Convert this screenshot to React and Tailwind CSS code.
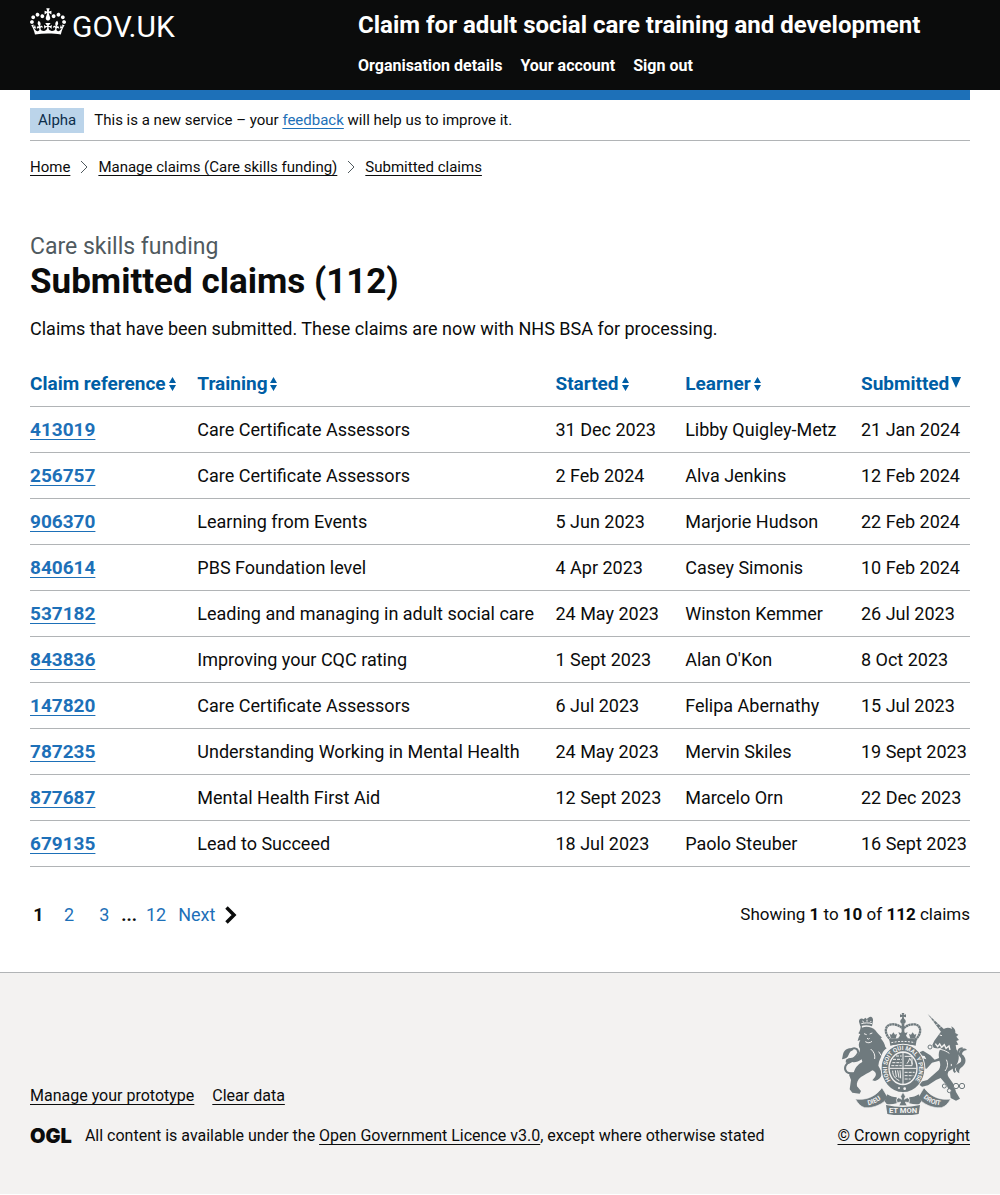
import React from "react";

const claims = [
  ["413019", "Care Certificate Assessors", "31 Dec 2023", "Libby Quigley-Metz", "21 Jan 2024"],
  ["256757", "Care Certificate Assessors", "2 Feb 2024", "Alva Jenkins", "12 Feb 2024"],
  ["906370", "Learning from Events", "5 Jun 2023", "Marjorie Hudson", "22 Feb 2024"],
  ["840614", "PBS Foundation level", "4 Apr 2023", "Casey Simonis", "10 Feb 2024"],
  ["537182", "Leading and managing in adult social care", "24 May 2023", "Winston Kemmer", "26 Jul 2023"],
  ["843836", "Improving your CQC rating", "1 Sept 2023", "Alan O'Kon", "8 Oct 2023"],
  ["147820", "Care Certificate Assessors", "6 Jul 2023", "Felipa Abernathy", "15 Jul 2023"],
  ["787235", "Understanding Working in Mental Health", "24 May 2023", "Mervin Skiles", "19 Sept 2023"],
  ["877687", "Mental Health First Aid", "12 Sept 2023", "Marcelo Orn", "22 Dec 2023"],
  ["679135", "Lead to Succeed", "18 Jul 2023", "Paolo Steuber", "16 Sept 2023"],
];

const columns = [
  { label: "Claim reference", width: "w-[17.8%]" },
  { label: "Training", width: "w-[38.1%]" },
  { label: "Started", width: "w-[13.8%]" },
  { label: "Learner", width: "w-[18.7%]" },
  { label: "Submitted", width: "w-[11.6%]", sorted: true },
];

function Crown() {
  return (
    <svg aria-hidden="true" viewBox="0 0 132 97" className="h-[27px] w-9 shrink-0" fill="currentColor">
      <path
        fillRule="evenodd"
        d="M25 30.2c3.5 1.5 7.7-.2 9.1-3.7 1.5-3.6-.2-7.8-3.9-9.2-3.6-1.4-7.6.3-9.1 3.9-1.4 3.5.3 7.5 3.9 9zM9 39.5c3.6 1.5 7.8-.2 9.2-3.7 1.5-3.6-.2-7.8-3.9-9.1-3.6-1.5-7.6.2-9.1 3.8-1.4 3.5.3 7.5 3.8 9zM4.4 57.2c3.5 1.5 7.7-.2 9.1-3.8 1.5-3.6-.2-7.7-3.9-9.1-3.5-1.5-7.6.3-9.1 3.8-1.4 3.5.3 7.6 3.9 9.1zm38.3-21.4c3.5 1.5 7.7-.2 9.1-3.8 1.5-3.6-.2-7.7-3.9-9.1-3.6-1.5-7.6.3-9.1 3.8-1.3 3.6.4 7.7 3.9 9.1zm64.4-5.6c-3.6 1.5-7.8-.2-9.1-3.7-1.5-3.6.2-7.8 3.8-9.2 3.6-1.4 7.7.3 9.2 3.9 1.3 3.5-.4 7.5-3.9 9zm15.9 9.3c-3.6 1.5-7.7-.2-9.1-3.7-1.5-3.6.2-7.8 3.7-9.1 3.6-1.5 7.7.2 9.2 3.8 1.5 3.5-.3 7.5-3.8 9zm4.7 17.7c-3.6 1.5-7.8-.2-9.2-3.8-1.5-3.6.2-7.7 3.9-9.1 3.6-1.5 7.7.3 9.2 3.8 1.3 3.5-.4 7.6-3.9 9.1zM89.3 35.8c-3.6 1.5-7.8-.2-9.2-3.8-1.4-3.6.2-7.7 3.9-9.1 3.6-1.5 7.7.3 9.2 3.8 1.4 3.6-.3 7.7-3.9 9.1zM69.7 17.7l8.9 4.7V9.3l-8.9 2.8c-.2-.3-.5-.6-.9-.9L72.4 0H59.6l3.5 11.2c-.3.3-.6.5-.9.9l-8.8-2.8v13.1l8.8-4.7c.3.3.6.7.9.9l-5 15.4v.1c-.2.8-.4 1.6-.4 2.4 0 4.1 3.1 7.5 7 8.1h.2c.3 0 .7.1 1 .1.4 0 .7 0 1-.1h.2c4-.6 7.1-4.1 7.1-8.1 0-.8-.1-1.7-.4-2.4V34l-5.1-15.4c.4-.2.7-.6 1-.9zM66 92.8c16.9 0 32.8 1.1 47.1 3.2 4-16.9 8.9-26.7 14-33.5l-9.6-3.4c1 4.9 1.1 7.2 0 10.2-1.5-1.4-3-4.3-4.2-8.7L108.6 76c2.8-2 5-3.2 7.5-3.3-4.4 9.4-10 11.9-13.6 11.2-4.3-.8-6.3-4.6-5.6-7.9 1-4.7 5.7-5.9 8-.5 4.3-8.7-3-11.4-7.6-8.8 7.1-7.2 7.9-13.5 2.1-21.1-8 6.1-8.1 12.3-4.5 20.8-4.7-5.4-12.1-2.5-9.5 6.2 3.4-5.2 7.9-2 7.2 3.1-.6 4.3-6.4 7.8-13.5 7.2-10.3-.9-10.9-8-11.2-13.8 2.5-.5 7.1 1.8 11 7.3L80.2 60c-4.1 4.4-8 5.3-12.3 5.4 1.4-4.4 8-11.6 8-11.6H55.5s6.4 7.2 7.9 11.6c-4.2-.1-8-1-12.3-5.4l1.4 16.4c3.9-5.5 8.5-7.7 10.9-7.3-.3 5.8-.9 12.8-11.1 13.8-7.2.6-12.9-2.9-13.5-7.2-.7-5 3.8-8.3 7.1-3.1 2.7-8.7-4.6-11.6-9.4-6.2 3.7-8.5 3.6-14.7-4.6-20.8-5.8 7.6-5 13.9 2.2 21.1-4.7-2.6-11.9.1-7.7 8.8 2.3-5.5 7.1-4.2 8.1.5.7 3.3-1.3 7.1-5.7 7.9-3.5.7-9-1.8-13.5-11.2 2.5.1 4.7 1.3 7.5 3.3l-4.7-15.4c-1.2 4.4-2.7 7.2-4.3 8.7-1.1-3-.9-5.3 0-10.2l-9.5 3.4c5 6.9 9.9 16.7 14 33.5 14.8-2.1 30.8-3.2 47.7-3.2z"
      />
    </svg>
  );
}

function CoatOfArms() {
  const ink = "#6f7a7e";
  const paper = "#f3f2f1";
  return (
    <svg aria-hidden="true" viewBox="36 24 375 306" className="mr-[3px] h-[102px] w-[125px]" fill={ink} stroke="none">
      {/* royal crown */}
      <path d="M215 24h8l-2 6 7-2v9l-7-2 2 8h-8l2-8-7 2v-9l7 2z" />
      <circle cx="219" cy="49" r="8" />
      <path
        d="M184 106C160 86 164 60 184 58c14-1 26 4 35 14 9-10 21-15 35-14 20 2 24 28 0 48"
        fill="none" stroke={ink} strokeWidth="7" strokeDasharray="7 1"
      />
      <path d="M215 56h8v32h-8z" />
      <path d="M178 104c26-7 56-7 82 0l-3 18c-24-6-52-6-76 0z" />
      <path d="M219 76l6 8 8-2-5 10 6 8h-30l6-8-5-10 8 2zM190 82l5 7 6-2-4 14h-14l-4-14 6 2zM248 82l5 7 6-2-4 14h-14l-4-14 6 2z" />
      <path d="M184 113c23-5 47-5 70 0" fill="none" stroke={paper} strokeWidth="3" strokeDasharray="6 4" />

      {/* lion */}
      <path d="M91 64l-4-14c-1-9 8-13 14-7l5-5 4 4 5-4c8-6 15-1 14 9l-3 17c-12-4-23-4-35 0z" />
      <path d="M94 56c10-3 22-3 32 0M97 48l5 4M111 44v6M124 48l-4 4" fill="none" stroke={paper} strokeWidth="3" />
      <path d="M96 68c14-6 32-1 40 8 6 8 12 14 20 22l-4 2c7 8 12 16 14 26l4 4c-10 6-14 16-17 26l-6 14-2 12c4 8 10 16 10 24-1 12-10 18-20 22l-8-2 8-10c6-8 2-16-8-20-12 8-24 14-34 20-10 8-14 18-12 28l12 14-4 8-22-3-8-10 4-28-6-16 6-6 8 2c2-14 12-27 26-34l-2-8c-10 7-20 10-28 8l-11 6-9-5 1-8 8-4 20-3c8-6 13-14 14-25-5-8-5-17 1-27l-8 3c2-8 4-15 8-20l-6-3c5-7 7-14 7-23l3-4z" />
      <path d="M102 86l8 3M119 87l8-3M111 99l4 4 4-4M106 110c8 5 14 4 20-1M122 132c10 8 14 18 12 30M146 140l8 12" fill="none" stroke={paper} strokeWidth="3" />
      <path
        d="M72 204c-20 4-30-6-26-20 6-16 34-24 38-40 2-14-12-18-22-10"
        fill="none" stroke={ink} strokeWidth="6"
      />
      <path d="M68 130c-16-3-27 6-29 18l-3 15c10-2 17-5 20-14 3-8 7-12 14-14z" />

      {/* unicorn */}
      <path d="M293 27l51 47-10 8z" />
      <path d="M300 40l7-2M309 49l8-3M318 59l9-4M327 68l8-4" stroke={paper} strokeWidth="2" />
      <path d="M336 76c8-8 20-10 30-4l-2-8c10 6 13 12 12 20l9 5-6 6 8 10-8 3 6 11-8 1 2 13c9 14 10 30 2 44-7 12-16 17-25 22-4 6-4 12 0 18l16 22 6 22 12 20-12 6-16-8-2-16-10-22-18-22-14 6-24 16-18 4-8-6 2-8 22-6 18-16 16-14c6-10 6-19 2-28l-22 6-16 18-10-1-3-12-12-14 10-5 14 4-5-10-16-2-3-8 14-6 22 14 13 13 13-5c-2-12-1-22 8-32l-12 4-12-3-4-8 6-13z" />
      <path d="M316 116l7 9 6-8 6 10 8-8 5 11 9-7 3 12" fill="none" stroke={paper} strokeWidth="4" />
      <path d="M312 133c16-3 32 2 46 12M329 90l7 2M349 164c6 12 4 24-4 34" fill="none" stroke={paper} strokeWidth="3" />
      <path
        d="M376 202c-10-10-2-18 8-22 18-8 18-20 6-30-10-9-4-20 8-20"
        fill="none" stroke={ink} strokeWidth="6"
      />
      <path d="M388 146c0-14 15-20 23-11-10 1-15 6-15 13 14 10 14 28 1 37-8 5-11 11-9 20-12-6-14-17-4-25 12-8 13-18 4-27z" />
      <g fill={paper} stroke={ink} strokeWidth="3">
        <circle cx="343" cy="243" r="6" />
        <circle cx="358" cy="257" r="6" />
        <circle cx="378" cy="243" r="8" />
        <circle cx="396" cy="243" r="8" />
        <circle cx="300" cy="126" r="6" />
        <circle cx="364" cy="180" r="4" />
      </g>

      {/* garter and shield */}
      <ellipse cx="219" cy="190" rx="67" ry="74" fill={paper} />
      <ellipse cx="219" cy="190" rx="54" ry="61" fill="none" stroke={ink} strokeWidth="20" />
      <path id="garter" d="M187 231A48 55 0 1 1 251 231" fill="none" />
      <text fill={paper} textAnchor="middle" className="font-[Roboto] text-[18px] font-bold">
        <textPath href="#garter" startOffset="50%">HONI SOIT QUI MAL Y PENSE</textPath>
      </text>
      <ellipse cx="219" cy="190" rx="40" ry="46" />
      <path d="M219 143v94M178 190h82" stroke={paper} strokeWidth="3" />
      <g fill="none" stroke={paper} strokeWidth="3">
        <path d="M189 163h26M187 173h28M198 153h17M184 182h31" strokeDasharray="9 3" />
        <path d="M224 154h22v28h-22M231 176l5-8 3-8 6 10 2 8" />
        <path d="M188 197c0 16 8 24 20 30M196 196l3 20M203 196l4 22M210 196l2 24" />
        <path d="M224 202h30M224 212h26M224 222h18" strokeDasharray="9 3" />
      </g>
      <circle cx="207" cy="249" r="3" fill={paper} />
      <circle cx="224" cy="251" r="4" fill={paper} />

      {/* motto ribbon and plant badge */}
      <path d="M76 282c28 4 58-4 80-34l18 30c-16 20-42 32-70 30-12-3-20-12-28-26z" stroke={paper} strokeWidth="2" />
      <path d="M362 282c-28 4-58-4-80-34l-18 30c16 20 42 32 70 30 12-3 20-12 28-26z" stroke={paper} strokeWidth="2" />
      <path d="M172 268c8 6 18 9 28 9v18c-10 2-20 4-30 2l-6-8zM266 268c-8 6-18 9-28 9v18c10 2 20 4 30 2l6-8z" />
      <path d="M168 300c34 8 68 8 102 0l-4 27c-30 6-64 6-94 0z" />
      <path d="M219 262l7 12-3 9 9-5 7 6-3 9-10-2 5 11h-24l5-11-10 2-3-9 7-6 9 5-3-9z" stroke={paper} strokeWidth="2" />
      <path id="dieu" d="M101 301c22 1 44-9 62-28" fill="none" />
      <path id="droit" d="M273 271c18 20 42 32 68 30" fill="none" />
      <g fill={paper} className="font-[Roboto] text-[20px] font-bold">
        <text textAnchor="middle"><textPath href="#dieu" startOffset="50%">DIEU</textPath></text>
        <text textAnchor="middle"><textPath href="#droit" startOffset="50%">DROIT</textPath></text>
        <text x="219" y="325" textAnchor="middle" className="text-[23px]">ET MON</text>
      </g>
    </svg>
  );
}

function SortMark({ sorted }) {
  return sorted ? (
    <svg aria-hidden="true" viewBox="0 0 10 16" className="ml-0.5 inline-block h-4 w-2.5 align-[-1px]" fill="currentColor">
      <path d="M0 2h10L5 13z" />
    </svg>
  ) : (
    <svg aria-hidden="true" viewBox="0 0 7 16" className="ml-[3px] inline-block h-4 w-[7px] align-[-2px]" fill="currentColor">
      <path d="M0 7h7L3.500 1zM0 9h7L3.500 15z" />
    </svg>
  );
}

function Chevron() {
  return (
    <svg aria-hidden="true" viewBox="0 0 8 14" className="h-3.5 w-2" fill="none" stroke="#505a5f">
      <path d="M1 1l6 6-6 6" />
    </svg>
  );
}

const plainLink = "underline decoration-1 underline-offset-[3px]";

export default function App() {
  return (
    <div className="bg-white font-[Roboto,sans-serif] text-[#0b0c0c] antialiased">
      <header className="bg-[#0b0c0c] px-[30px] text-white">
        <div className="grid grid-cols-[1fr_2fr] gap-x-[22px] pb-3 pt-2">
          <a href="#home" className="flex items-start gap-1.5 self-start">
            <Crown />
            <span className="pt-1 text-[30px] font-normal leading-[30px]">GOV.UK</span>
          </a>
          <div>
            <a href="#service" className="block text-[24px] font-bold leading-[34px]">
              Claim for adult social care training and development
            </a>
            <nav aria-label="Menu" className="mt-3 flex gap-[18px] text-[16px] font-bold leading-6">
              <a href="#organisation">Organisation details</a>
              <a href="#account">Your account</a>
              <a href="#sign-out">Sign out</a>
            </nav>
          </div>
        </div>
      </header>

      <div className="px-[30px]">
        <div className="h-2.5 bg-[#1d70b8]" />
        <div className="flex items-center gap-2.5 border-b border-[#b1b4b6] pb-[7px] pt-2 text-[15px] leading-[25px]">
          <strong className="bg-[#bbd4ea] px-2 font-normal text-[#0c2d4a]">Alpha</strong>
          <span>
            This is a new service – your{" "}
            <a href="#feedback" className="text-[#1d70b8] underline decoration-1 underline-offset-[3px]">feedback</a>{" "}
            will help us to improve it.
          </span>
        </div>
        <nav aria-label="Breadcrumb" className="mt-4">
          <ol className="flex items-center gap-2.5 text-[15px] leading-5">
            <li><a href="#home" className={plainLink}>Home</a></li>
            <li className="flex items-center gap-2.5"><Chevron /><a href="#manage" className={plainLink}>Manage claims (Care skills funding)</a></li>
            <li className="flex items-center gap-2.5"><Chevron /><a href="#submitted" className={plainLink}>Submitted claims</a></li>
          </ol>
        </nav>

        <main className="pb-10 pt-[55px]">
          <span className="block text-[23px] leading-[30px] text-[#505a5f]">Care skills funding</span>
          <h1 className="text-[35px] font-bold leading-10">Submitted claims (112)</h1>
          <p className="mt-[14px] text-[18px] leading-[25px]">
            Claims that have been submitted. These claims are now with NHS BSA for processing.
          </p>

          <table className="mt-5 w-full border-collapse text-left text-[18px] leading-[25px]">
            <thead>
              <tr className="border-b border-[#b1b4b6] text-[19px] text-[#005ea5]">
                {columns.map((c) => (
                  <th key={c.label} scope="col" aria-sort={c.sorted ? "descending" : "none"} className={`${c.width} py-2.5 font-bold`}>
                    <button type="button" className="whitespace-nowrap font-bold">
                      {c.label}
                      <SortMark sorted={c.sorted} />
                    </button>
                  </th>
                ))}
              </tr>
            </thead>
            <tbody>
              {claims.map(([ref, training, started, learner, submitted]) => (
                <tr key={ref} className="border-b border-[#b1b4b6]">
                  <td className="py-2.5 text-[19px]">
                    <a href={`#${ref}`} className="font-bold text-[#1d70b8] underline decoration-1 underline-offset-[3px]">{ref}</a>
                  </td>
                  <td>{training}</td>
                  <td className="whitespace-nowrap">{started}</td>
                  <td className="whitespace-nowrap">{learner}</td>
                  <td className="whitespace-nowrap">{submitted}</td>
                </tr>
              ))}
            </tbody>
          </table>

          <div className="mt-[30px] flex items-center justify-between leading-[35px]">
            <nav aria-label="Pagination" className="flex items-center text-[18px] text-[#1d70b8]">
              <span aria-current="page" className="w-[17px] text-center font-bold text-[#0b0c0c]">1</span>
              <a href="#page-2" className="ml-[17px]">2</a>
              <a href="#page-3" className="ml-[25px]">3</a>
              <span className="ml-3 font-bold text-[#0b0c0c]">...</span>
              <a href="#page-12" className="ml-[9px]">12</a>
              <a href="#next" className="ml-3 flex items-center gap-2.5">
                Next
                <svg aria-hidden="true" viewBox="0 0 12 18" className="h-[18px] w-3" fill="none" stroke="#0b0c0c" strokeWidth="3.500">
                  <path d="M1.500 1.500L9 9l-7.500 7.500" />
                </svg>
              </a>
            </nav>
            <p className="text-[17px]">
              Showing <b>1</b> to <b>10</b> of <b>112</b> claims
            </p>
          </div>
        </main>
      </div>

      <footer className="border-t border-[#b1b4b6] bg-[#f3f2f1] px-[30px] pb-12 pt-10 text-[16px] leading-5">
        <div className="flex items-end justify-between">
          <div>
            <ul className="flex gap-[18px]">
              <li><a href="#prototype" className={plainLink}>Manage your prototype</a></li>
              <li><a href="#clear" className={plainLink}>Clear data</a></li>
            </ul>
            <div className="mt-5 flex items-center gap-[13px]">
              <span aria-hidden="true" className="font-[Inter] text-[20px] font-black leading-5">OGL</span>
              <span>
                All content is available under the{" "}
                <a href="#licence" className={plainLink}>Open Government Licence v3.0</a>, except where otherwise stated
              </span>
            </div>
          </div>
          <a href="#copyright" className="flex flex-col items-end gap-[11px]">
            <CoatOfArms />
            <span className={plainLink}>© Crown copyright</span>
          </a>
        </div>
      </footer>
    </div>
  );
}
